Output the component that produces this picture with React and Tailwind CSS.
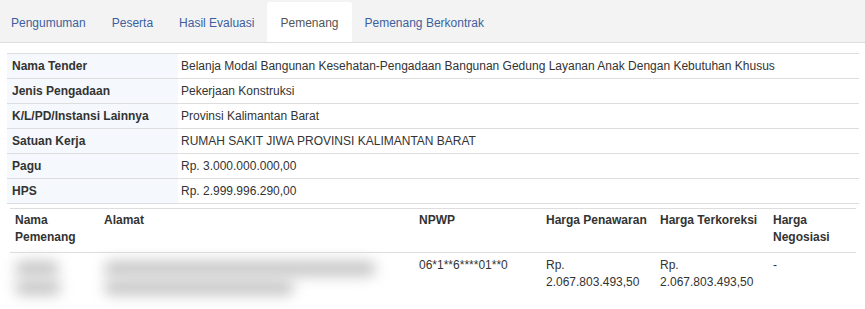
import React from 'react';

const tabs = ['Pengumuman', 'Peserta', 'Hasil Evaluasi', 'Pemenang', 'Pemenang Berkontrak'];

const info = [
  ['Nama Tender', 'Belanja Modal Bangunan Kesehatan-Pengadaan Bangunan Gedung Layanan Anak Dengan Kebutuhan Khusus'],
  ['Jenis Pengadaan', 'Pekerjaan Konstruksi'],
  ['K/L/PD/Instansi Lainnya', 'Provinsi Kalimantan Barat'],
  ['Satuan Kerja', 'RUMAH SAKIT JIWA PROVINSI KALIMANTAN BARAT'],
  ['Pagu', 'Rp. 3.000.000.000,00'],
  ['HPS', 'Rp. 2.999.996.290,00'],
];

// blurred placeholder for redacted text
const Smudge = ({ className }) => (
  <div className={`rounded-full bg-[#c4c4c4] blur-[7px] ${className}`} />
);

export default function App() {
  return (
    <div className="w-[865px] h-[309px] overflow-hidden bg-white text-[12px] text-[#333] font-['Liberation_Sans',Arial,sans-serif]">
      {/* Tab bar */}
      <div className="flex h-[43px] items-end bg-[#f3f3f3] border-b border-[#dddddd]">
        <div className="flex -ml-[2px]">
          {tabs.map((t) => (
            <div
              key={t}
              className={
                t === 'Pemenang'
                  ? 'h-[40px] px-[13px] pt-[12px] bg-white text-[#555] rounded-t-[3px] -mb-px'
                  : 'h-[40px] px-[13px] pt-[12px] text-[#3d5f9e]'
              }
            >
              {t}
            </div>
          ))}
        </div>
      </div>

      {/* Tender info */}
      <div className="pl-[7px] pr-[6px] pt-[10px]">
        <table className="w-full table-fixed border-collapse">
          <tbody>
            {info.map(([k, v]) => (
              <tr key={k} className="border-t border-b border-[#dddddd]">
                <td className="w-[171px] h-[25px] px-[5px] font-bold bg-[#f5f8fc] leading-[17px]">{k}</td>
                <td className="h-[25px] px-[3px] leading-[17px]">{v}</td>
              </tr>
            ))}
          </tbody>
        </table>
      </div>

      {/* Winner table */}
      <div className="pl-[10px] pr-[9px] pt-[4px]">
        <table className="w-full table-fixed border-collapse leading-[17px]">
          <thead>
            <tr className="border-t border-b border-[#dddddd] align-top">
              <th className="w-[89px] px-[5px] pt-[3px] pb-[6px] text-left font-bold">Nama Pemenang</th>
              <th className="w-[315px] px-[5px] pt-[3px] pb-[6px] text-left font-bold">Alamat</th>
              <th className="w-[127px] px-[5px] pt-[3px] pb-[6px] text-left font-bold">NPWP</th>
              <th className="w-[114px] px-[5px] pt-[3px] pb-[6px] text-left font-bold">Harga Penawaran</th>
              <th className="w-[113px] px-[5px] pt-[3px] pb-[6px] text-left font-bold">Harga Terkoreksi</th>
              <th className="px-[5px] pt-[3px] pb-[6px] text-left font-bold">Harga Negosiasi</th>
            </tr>
          </thead>
          <tbody>
            <tr className="align-top">
              <td className="px-[5px] pt-[4px]">
                <div className="flex flex-col gap-[4px] pt-[4px]">
                  <Smudge className="h-[15px] w-[44px]" />
                  <Smudge className="h-[15px] w-[46px]" />
                </div>
              </td>
              <td className="px-[5px] pt-[4px]">
                <div className="flex flex-col gap-[4px] pt-[4px]">
                  <Smudge className="h-[15px] w-[272px]" />
                  <Smudge className="h-[15px] w-[190px]" />
                </div>
              </td>
              <td className="px-[5px] pt-[4px]">06*1**6****01**0</td>
              <td className="px-[5px] pt-[4px]">Rp. 2.067.803.493,50</td>
              <td className="px-[5px] pt-[4px]">Rp. 2.067.803.493,50</td>
              <td className="px-[5px] pt-[4px]">-</td>
            </tr>
          </tbody>
        </table>
      </div>
    </div>
  );
}
